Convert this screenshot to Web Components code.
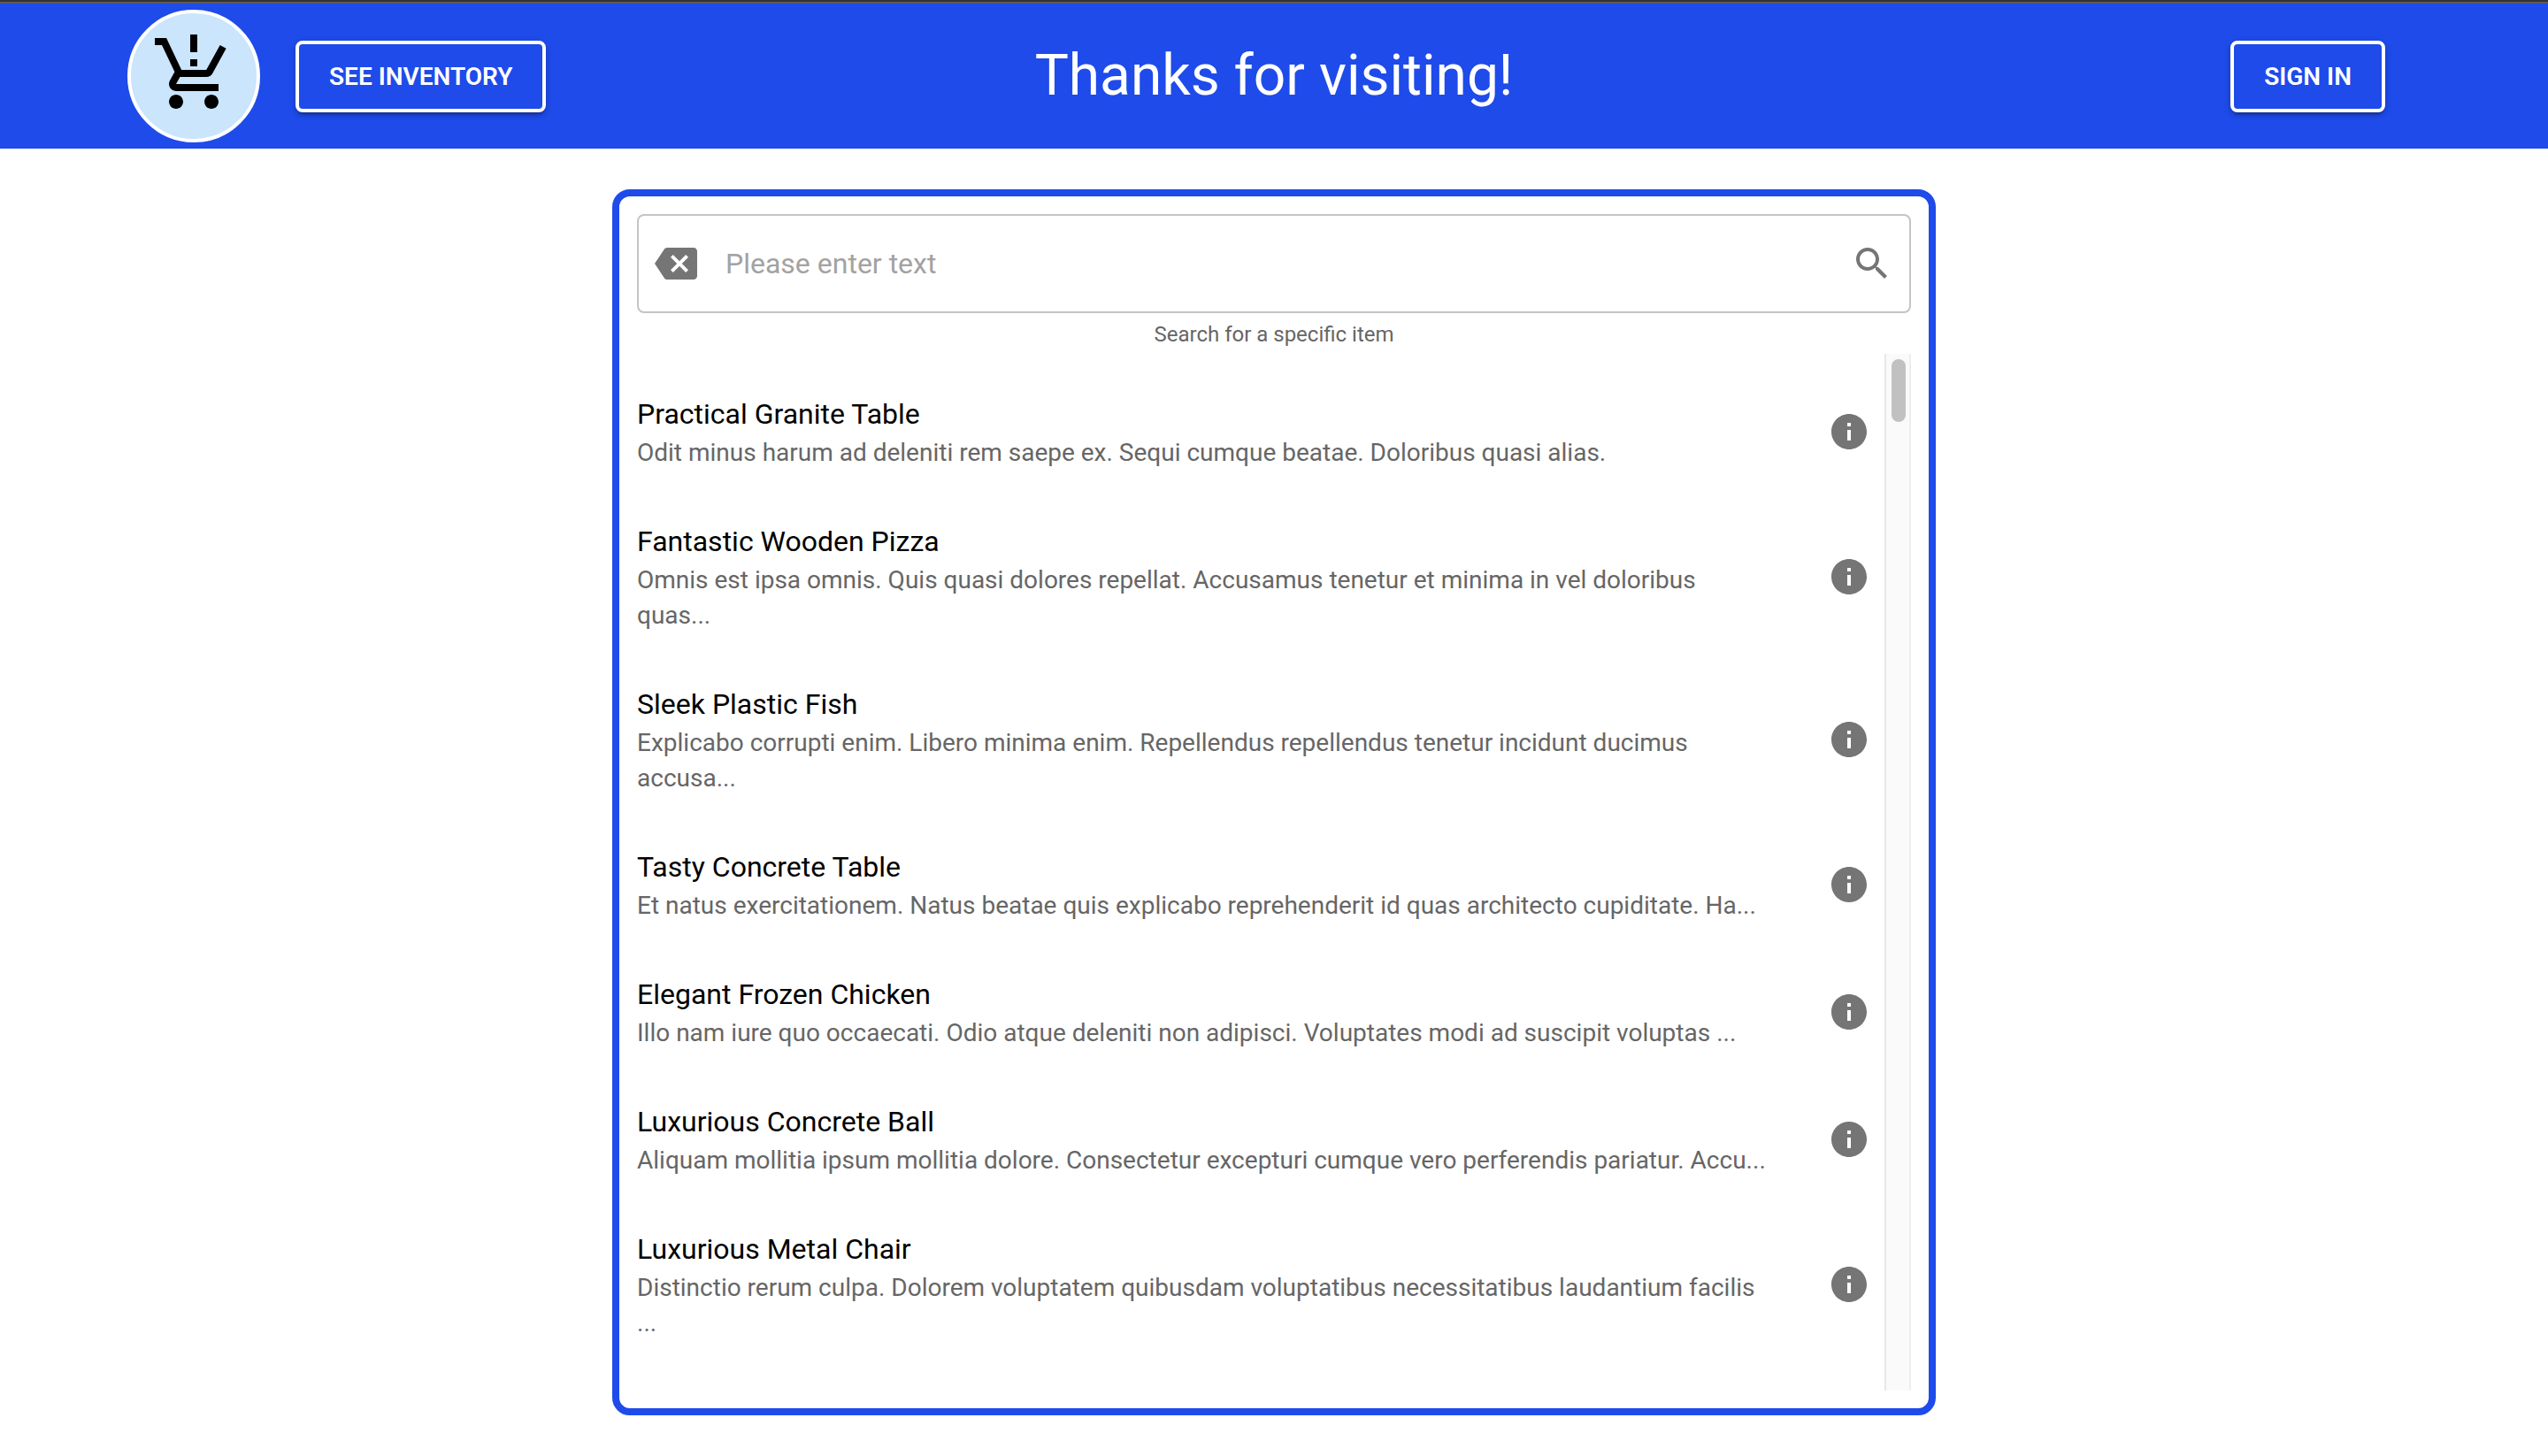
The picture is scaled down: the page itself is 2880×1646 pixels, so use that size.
<!DOCTYPE html>
<html lang="en">
<head>
<meta charset="utf-8">
<meta name="viewport" content="width=device-width, initial-scale=1">
<title>Inventory</title>
<style>
  body { margin: 0; background: #fff; font-family: Roboto, "Liberation Sans", sans-serif; }
</style>
</head>
<body>
<store-app></store-app>

<template id="app-tpl">
  <style>
    :host { display: flex; flex-direction: column; height: 100vh; }
    main { flex: 1; min-height: 0; display: flex; justify-content: center; padding: 46px 0; }
  </style>
  <store-header>
    <outline-button slot="start">See inventory</outline-button>
    Thanks for visiting!
    <outline-button slot="end">Sign in</outline-button>
  </store-header>
  <main>
    <inventory-card>
      <search-field slot="search"></search-field>
      <item-row name="Practical Granite Table">Odit minus harum ad deleniti rem saepe ex. Sequi cumque beatae. Doloribus quasi alias.</item-row>
      <item-row name="Fantastic Wooden Pizza">Omnis est ipsa omnis. Quis quasi dolores repellat. Accusamus tenetur et minima in vel doloribus quas...</item-row>
      <item-row name="Sleek Plastic Fish">Explicabo corrupti enim. Libero minima enim. Repellendus repellendus tenetur incidunt ducimus accusa...</item-row>
      <item-row name="Tasty Concrete Table">Et natus exercitationem. Natus beatae quis explicabo reprehenderit id quas architecto cupiditate. Ha...</item-row>
      <item-row name="Elegant Frozen Chicken">Illo nam iure quo occaecati. Odio atque deleniti non adipisci. Voluptates modi ad suscipit voluptas ...</item-row>
      <item-row name="Luxurious Concrete Ball">Aliquam mollitia ipsum mollitia dolore. Consectetur excepturi cumque vero perferendis pariatur. Accu...</item-row>
      <item-row name="Luxurious Metal Chair">Distinctio rerum culpa. Dolorem voluptatem quibusdam voluptatibus necessitatibus laudantium facilis ...</item-row>
    </inventory-card>
  </main>
</template>

<template id="header-tpl">
  <style>
    :host { display: block; border-top: 2px solid #333; }
    header {
      display: grid; grid-template-columns: 1fr auto 1fr; align-items: center;
      box-sizing: border-box; height: 166px; padding: 0 184px 0 144px;
      border-top: 2px solid #5c5c5c; background: #1e4bea; color: #fff;
    }
    .start { display: flex; align-items: center; gap: 40px; }
    .end { display: flex; justify-content: flex-end; }
    h1 { margin: 0 0 0 40px; font-size: 64px; line-height: 76px; font-weight: 400; }
    .logo {
      box-sizing: border-box; width: 150px; height: 150px; border: 4px solid #fff; border-radius: 50%;
      background: #cae5fc; display: flex; justify-content: center; padding-top: 20px;
    }
    .logo svg { width: 96px; height: 96px; }
  </style>
  <header>
    <div class="start">
      <div class="logo">
        <svg viewBox="0 0 24 24" aria-hidden="true"><path d="M13 10h-2V8h2v2zm0-4h-2V1h2v5zM7 18c-1.100 0-1.990.900-1.990 2S5.900 22 7 22s2-.900 2-2-.900-2-2-2zm10 0c-1.100 0-1.990.900-1.990 2s.890 2 1.990 2 2-.900 2-2-.900-2-2-2zM8.100 13h7.450c.750 0 1.410-.410 1.750-1.030L21.160 4.960 19.420 4l-3.870 7H8.530L4.270 2H1v2h2l3.600 7.590-1.350 2.440C4.520 15.370 5.480 17 7 17h12v-2H7l1.100-2z"/></svg>
      </div>
      <slot name="start"></slot>
    </div>
    <h1><slot></slot></h1>
    <div class="end"><slot name="end"></slot></div>
  </header>
</template>

<template id="button-tpl">
  <style>
    :host { display: block; }
    button {
      display: block; padding: 12px 34px; border: 4px solid #fff; border-radius: 8px;
      background: #1e4bea; color: #fff; font: 600 28px/49px Roboto, "Liberation Sans", sans-serif;
      text-transform: uppercase; cursor: pointer;
      box-shadow: 0 6px 2px -4px rgba(0,0,0,.2), 0 4px 4px 0 rgba(0,0,0,.14), 0 2px 10px 0 rgba(0,0,0,.12);
    }
  </style>
  <button type="button"><slot></slot></button>
</template>

<template id="card-tpl">
  <style>
    :host {
      display: flex; flex-direction: column; width: 50%; padding: 20px;
      border: 8px solid #1e4bea; border-radius: 20px; background: #fff;
    }
    .body { flex: 1; min-height: 0; display: flex; }
    .list { flex: 1; min-width: 0; overflow: hidden; padding: 16px 0; box-sizing: border-box; }
    .track {
      box-sizing: border-box; width: 30px; padding: 6px 4px 6px 6px;
      background: #fafafa; border-left: 2px solid #e8e8e8; border-right: 2px solid #ededed;
    }
    .thumb { width: 16px; height: 71px; border-radius: 8px; background: #c1c1c1; }
  </style>
  <slot name="search"></slot>
  <div class="body">
    <div class="list" role="list"><slot></slot></div>
    <div class="track"><div class="thumb"></div></div>
  </div>
</template>

<template id="search-tpl">
  <style>
    :host { display: block; }
    .box {
      display: flex; align-items: center; box-sizing: border-box; height: 112px; padding: 0 18px;
      border: 2px solid #c4c4c4; border-radius: 8px;
    }
    button { display: block; padding: 0; border: 0; background: none; color: #757575; cursor: pointer; }
    svg { display: block; width: 48px; height: 48px; fill: currentColor; }
    input {
      flex: 1; min-width: 0; height: 64px; padding: 0 32px; border: 0; outline: 0; background: none;
      font: 400 32px/38px Roboto, "Liberation Sans", sans-serif; color: rgba(0,0,0,.87);
    }
    input::placeholder { color: #a2a2a2; opacity: 1; }
    label { display: block; padding: 4px 0 2px; font-size: 24px; line-height: 40px; text-align: center; color: #666; }
  </style>
  <div class="box">
    <button type="button" aria-label="Clear">
      <svg viewBox="0 0 24 24"><path d="M22 3H7c-.690 0-1.230.350-1.590.880L0 12l5.410 8.110c.360.530.900.890 1.590.890h15c1.100 0 2-.900 2-2V5c0-1.100-.900-2-2-2zm-3 12.590L17.590 17 14 13.410 10.410 17 9 15.590 12.590 12 9 8.410 10.410 7 14 10.590 17.590 7 19 8.410 15.410 12 19 15.590z"/></svg>
    </button>
    <input id="q" type="text" placeholder="Please enter text">
    <button type="button" aria-label="Search">
      <svg viewBox="0 0 24 24"><path d="M15.500 14h-.790l-.280-.270C15.410 12.590 16 11.110 16 9.500 16 5.910 13.090 3 9.500 3S3 5.910 3 9.500 5.910 16 9.500 16c1.610 0 3.090-.590 4.230-1.570l.270.280v.790l5 4.990L20.490 19l-4.990-5zm-6 0C7.010 14 5 11.990 5 9.500S7.010 5 9.500 5 14 7.010 14 9.500 11.990 14 9.500 14z"/></svg>
    </button>
  </div>
  <label for="q">Search for a specific item</label>
</template>

<template id="row-tpl">
  <style>
    :host { display: flex; align-items: center; gap: 64px; padding: 28px 16px 28px 0; }
    .text { flex: 1; min-width: 0; }
    .name { font-size: 32px; line-height: 48px; color: #000; }
    p { margin: 0; font-size: 28px; line-height: 40px; color: #666; }
    button { display: block; padding: 0; border: 0; background: none; color: #757575; cursor: pointer; }
    svg { display: block; width: 48px; height: 48px; fill: currentColor; }
  </style>
  <div class="text">
    <div class="name"></div>
    <p><slot></slot></p>
  </div>
  <button type="button" aria-label="Details">
    <svg viewBox="0 0 24 24"><path d="M12 2C6.480 2 2 6.480 2 12s4.480 10 10 10 10-4.480 10-10S17.520 2 12 2zm1 15h-2v-6h2v6zm0-8h-2V7h2v2z"/></svg>
  </button>
</template>

<script>
  class TemplateElement extends HTMLElement {
    constructor() {
      super();
      const tpl = document.getElementById(this.constructor.template);
      this.attachShadow({ mode: "open" }).appendChild(document.importNode(tpl.content, true));
    }
  }
  class OutlineButton extends TemplateElement { static template = "button-tpl"; }
  class StoreHeader extends TemplateElement { static template = "header-tpl"; }
  class SearchField extends TemplateElement { static template = "search-tpl"; }
  class InventoryCard extends TemplateElement { static template = "card-tpl"; }
  class StoreApp extends TemplateElement { static template = "app-tpl"; }
  class ItemRow extends TemplateElement {
    static template = "row-tpl";
    connectedCallback() {
      this.setAttribute("role", "listitem");
      this.shadowRoot.querySelector(".name").textContent = this.getAttribute("name");
    }
  }
  customElements.define("outline-button", OutlineButton);
  customElements.define("store-header", StoreHeader);
  customElements.define("search-field", SearchField);
  customElements.define("inventory-card", InventoryCard);
  customElements.define("item-row", ItemRow);
  customElements.define("store-app", StoreApp);
</script>
</body>
</html>
